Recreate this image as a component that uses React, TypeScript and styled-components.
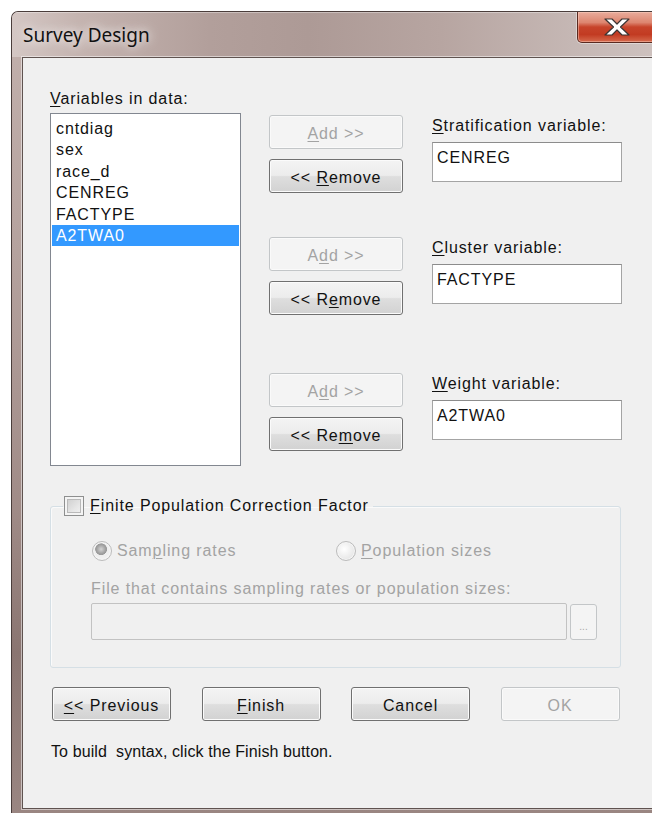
import styled, { createGlobalStyle } from 'styled-components'

const GlobalStyle = createGlobalStyle`
  html, body {
    margin: 0;
    padding: 0;
    background: #fff;
    overflow: hidden;
  }
  body {
    font-family: "Liberation Sans", Arial, sans-serif;
  }
`

const Window = styled.div`
  margin: 11px 0 0 11px;
  width: 660px;
  height: 803px;
  box-sizing: border-box;
  display: flex;
  flex-direction: column;
  border: 1px solid #4a3d3b;
  border-right: none;
  border-radius: 7px 0 0 0;
  overflow: hidden;
  background: linear-gradient(
    180deg,
    #c3b1ad 0%,
    #b5a29e 30%,
    #a08b87 62%,
    #8a7571 80%,
    #9a8682 100%
  );
`

const TitleBar = styled.div`
  height: 45px;
  flex: none;
  display: flex;
  align-items: flex-start;
  background: linear-gradient(
    90deg,
    #d4c7c4 0%,
    #c5b4b0 10%,
    #b29f9b 30%,
    #ad9a96 45%,
    #b7a5a1 65%,
    #c5b7b4 85%,
    #cfc3c0 100%
  );
  box-shadow: inset 0 1px 0 rgba(255, 255, 255, 0.35);
`

const Title = styled.div`
  flex: 1;
  padding: 10px 0 0 11px;
  font-family: "Noto Sans", "Open Sans", sans-serif;
  font-size: 19px;
  line-height: 26px;
  color: #111;
  text-shadow: 0 0 8px rgba(255, 255, 255, 0.9), 0 0 16px rgba(255, 255, 255, 0.6);
`

const CloseButton = styled.div`
  width: 80px;
  height: 31px;
  margin-right: 14px;
  box-sizing: border-box;
  display: flex;
  align-items: center;
  justify-content: center;
  border: 1px solid #5a2a20;
  border-top: none;
  border-radius: 0 0 5px 5px;
  background: linear-gradient(
    180deg,
    #e9ab9b 0%,
    #dd8670 35%,
    #c7442b 50%,
    #c23b22 75%,
    #d66a4d 100%
  );
  box-shadow: inset 0 0 0 1px rgba(255, 215, 200, 0.45),
    0 0 0 1px rgba(255, 255, 255, 0.4);
`

const FrameBody = styled.div`
  flex: 1;
  display: flex;
  padding: 0 0 4px 10px;
  min-height: 0;
`

const Client = styled.div`
  flex: 1;
  display: flex;
  flex-direction: column;
  background: #f0f0f0;
  border: 1px solid #5f5350;
  border-right: none;
  box-shadow: 0 0 0 1px rgba(255, 255, 255, 0.5);
  padding: 30px 0 0 27px;
  font-size: 16px;
  letter-spacing: 0.9px;
  color: #111;
`

const Key = styled.span`
  text-decoration: underline;
  text-underline-offset: 2px;
  text-decoration-thickness: 1px;
`

const TopSection = styled.div`
  display: flex;
  align-items: flex-start;
`

const SourceColumn = styled.div`
  width: 191px;
  display: flex;
  flex-direction: column;
`

const Label = styled.div<{ $disabled?: boolean }>`
  height: 18px;
  line-height: 22px;
  white-space: nowrap;
  color: ${(p) => (p.$disabled ? '#a3a3a3' : '#111')};
`

const VarList = styled.div`
  margin-top: 7px;
  height: 353px;
  box-sizing: border-box;
  border: 1px solid #828790;
  background: #fff;
  padding: 4px 1px 0 1px;
`

const VarItem = styled.div<{ $selected?: boolean }>`
  height: 21.4px;
  line-height: 21.4px;
  padding-left: 4px;
  background: ${(p) => (p.$selected ? '#3399ff' : 'transparent')};
  color: ${(p) => (p.$selected ? '#fff' : '#111')};
`

const TargetArea = styled.div`
  margin-left: 28px;
  display: flex;
  flex-direction: column;
`

const TargetRow = styled.div<{ $offset: number }>`
  display: flex;
  gap: 29px;
  margin-top: ${(p) => p.$offset}px;
`

const MoveButtons = styled.div`
  width: 134px;
  display: flex;
  flex-direction: column;
  gap: 10px;
`

const TargetField = styled.div`
  width: 190px;
  display: flex;
  flex-direction: column;
`

const TextBox = styled.div`
  margin-top: 9px;
  height: 40px;
  box-sizing: border-box;
  border: 1px solid #a4a4a4;
  border-top-color: #8c8c8c;
  background: #fff;
  padding: 6px 4px 0;
  line-height: 18px;
`

const Button = styled.button<{ $width: number }>`
  width: ${(p) => p.$width}px;
  height: 34px;
  padding: 3px 0 0;
  box-sizing: border-box;
  font: inherit;
  letter-spacing: inherit;
  color: #111;
  border: 1px solid #707070;
  border-radius: 3px;
  background: linear-gradient(
    180deg,
    #f4f4f4 0%,
    #ececec 48%,
    #dedede 52%,
    #d2d2d2 100%
  );
  box-shadow: inset 0 0 0 1px #fbfbfb;

  &:disabled {
    color: #a3a3a3;
    border-color: #c3c6c8;
    background: #f4f4f4;
    box-shadow: inset 0 0 0 1px #fafafa;
  }
`

const Group = styled.fieldset`
  margin: 30px 0 0 0;
  padding: 0;
  width: 571px;
  min-width: 0;
  box-sizing: border-box;
  border: 1px solid #d5dfe5;
  border-radius: 3px;
  box-shadow: inset 1px 1px 0 #fafafa;
`

const GroupLegend = styled.legend`
  margin-left: 12px;
  padding: 0 4px 0 1px;
  height: 20px;
  display: flex;
  align-items: center;
  gap: 6px;
  line-height: 22px;
`

const CheckBox = styled.span`
  width: 20px;
  height: 20px;
  box-sizing: border-box;
  border: 1px solid #8e8f8f;
  background: linear-gradient(135deg, #c9c9c9 0%, #e6e6e6 60%, #f4f4f4 100%);
  box-shadow: inset 0 0 0 2px #f4f4f4, inset 0 0 0 3px #b9b9b9;
`

const GroupContent = styled.div`
  padding: 24px 0 27px 40px;
  display: flex;
  flex-direction: column;
`

const RadioRow = styled.div`
  display: grid;
  grid-template-columns: 244px auto;
  height: 20px;
`

const RadioOption = styled.div`
  display: flex;
  align-items: center;
  gap: 5px;
  color: #a3a3a3;
  line-height: 22px;
  margin-left: 1px;
`

const Radio = styled.span<{ $checked?: boolean }>`
  width: 20px;
  height: 20px;
  flex: none;
  box-sizing: border-box;
  border-radius: 50%;
  border: 1px solid #bcbcbc;
  background: ${(p) =>
    p.$checked
      ? 'radial-gradient(circle at 45% 40%, #d4d4d4 0%, #9e9e9e 32%, #9a9a9a 38%, #eeeeee 42%, #f6f6f6 100%)'
      : 'radial-gradient(circle at 40% 40%, #ffffff 0%, #ececec 55%, #dedede 100%)'};
  box-shadow: inset 0 0 0 1px #f6f6f6;
`

const FileLabel = styled(Label)`
  margin-top: 18px;
`

const FileRow = styled.div`
  margin-top: 7px;
  display: flex;
  align-items: flex-start;
  gap: 3px;
`

const FileBox = styled.div`
  width: 476px;
  height: 37px;
  box-sizing: border-box;
  border: 1px solid #c2c2c2;
  border-radius: 2px;
  background: #f0f0f0;
`

const BrowseButton = styled.div`
  width: 27px;
  height: 36px;
  margin-top: 1px;
  box-sizing: border-box;
  border: 1px solid #c3c6c8;
  border-radius: 3px;
  background: #f4f4f4;
  color: #a8a8a8;
  font-size: 10px;
  letter-spacing: 0;
  display: flex;
  align-items: flex-end;
  justify-content: center;
  padding-bottom: 7px;
`

const DialogButtons = styled.div`
  margin: 19px 0 0 2px;
  display: flex;
  gap: 30.5px;
`

const Hint = styled.div`
  margin: 20px 0 0 1px;
  height: 18px;
  line-height: 22px;
  letter-spacing: 0.1px;
  white-space: pre;
`

const variables = ['cntdiag', 'sex', 'race_d', 'CENREG', 'FACTYPE', 'A2TWA0']

type TargetProps = {
  offset: number
  addKey: 0 | 1
  removeKey: 0 | 1 | 2
  label: React.ReactNode
  value: string
}

const AddLabel = ({ keyIndex }: { keyIndex: 0 | 1 }) =>
  keyIndex === 0 ? (
    <>
      <Key>A</Key>dd &gt;&gt;
    </>
  ) : (
    <>
      A<Key>d</Key>d &gt;&gt;
    </>
  )

const RemoveLabel = ({ keyIndex }: { keyIndex: 0 | 1 | 2 }) => {
  if (keyIndex === 0)
    return (
      <>
        &lt;&lt; <Key>R</Key>emove
      </>
    )
  if (keyIndex === 1)
    return (
      <>
        &lt;&lt; R<Key>e</Key>move
      </>
    )
  return (
    <>
      &lt;&lt; Re<Key>m</Key>ove
    </>
  )
}

const Target = ({ offset, addKey, removeKey, label, value }: TargetProps) => (
  <TargetRow $offset={offset}>
    <MoveButtons>
      <Button $width={134} disabled>
        <AddLabel keyIndex={addKey} />
      </Button>
      <Button $width={134}>
        <RemoveLabel keyIndex={removeKey} />
      </Button>
    </MoveButtons>
    <TargetField>
      <Label>{label}</Label>
      <TextBox>{value}</TextBox>
    </TargetField>
  </TargetRow>
)

const CloseGlyph = () => (
  <svg width="26" height="18" viewBox="-1 -1 26 18">
    <polygon
      points="0,0 7,0 12,5 17,0 24,0 15.5,8 24,16 17,16 12,11 7,16 0,16 8.5,8"
      fill="#fff"
      stroke="#3b3433"
      strokeWidth="1.2"
      strokeLinejoin="round"
    />
  </svg>
)

export default function App() {
  return (
    <>
      <GlobalStyle />
      <Window>
        <TitleBar>
          <Title>Survey Design</Title>
          <CloseButton>
            <CloseGlyph />
          </CloseButton>
        </TitleBar>
        <FrameBody>
          <Client>
            <TopSection>
              <SourceColumn>
                <Label>
                  <Key>V</Key>ariables in data:
                </Label>
                <VarList>
                  {variables.map((v) => (
                    <VarItem key={v} $selected={v === 'A2TWA0'}>
                      {v}
                    </VarItem>
                  ))}
                </VarList>
              </SourceColumn>
              <TargetArea>
                <Target
                  offset={27}
                  addKey={0}
                  removeKey={0}
                  label={
                    <>
                      <Key>S</Key>tratification variable:
                    </>
                  }
                  value="CENREG"
                />
                <Target
                  offset={44}
                  addKey={1}
                  removeKey={1}
                  label={
                    <>
                      <Key>C</Key>luster variable:
                    </>
                  }
                  value="FACTYPE"
                />
                <Target
                  offset={58}
                  addKey={1}
                  removeKey={2}
                  label={
                    <>
                      <Key>W</Key>eight variable:
                    </>
                  }
                  value="A2TWA0"
                />
              </TargetArea>
            </TopSection>

            <Group>
              <GroupLegend>
                <CheckBox />
                <span>
                  <Key>F</Key>inite Population Correction Factor
                </span>
              </GroupLegend>
              <GroupContent>
                <RadioRow>
                  <RadioOption>
                    <Radio $checked />
                    <span>
                      Sam<Key>p</Key>ling rates
                    </span>
                  </RadioOption>
                  <RadioOption>
                    <Radio />
                    <span>
                      <Key>P</Key>opulation sizes
                    </span>
                  </RadioOption>
                </RadioRow>
                <FileLabel $disabled>
                  File that contains sampling rates or population sizes:
                </FileLabel>
                <FileRow>
                  <FileBox />
                  <BrowseButton>...</BrowseButton>
                </FileRow>
              </GroupContent>
            </Group>

            <DialogButtons>
              <Button $width={119}>
                <Key>&lt;</Key>&lt; Previous
              </Button>
              <Button $width={119}>
                <Key>F</Key>inish
              </Button>
              <Button $width={119}>Cancel</Button>
              <Button $width={119} disabled>
                OK
              </Button>
            </DialogButtons>

            <Hint>To build  syntax, click the Finish button.</Hint>
          </Client>
        </FrameBody>
      </Window>
    </>
  )
}
